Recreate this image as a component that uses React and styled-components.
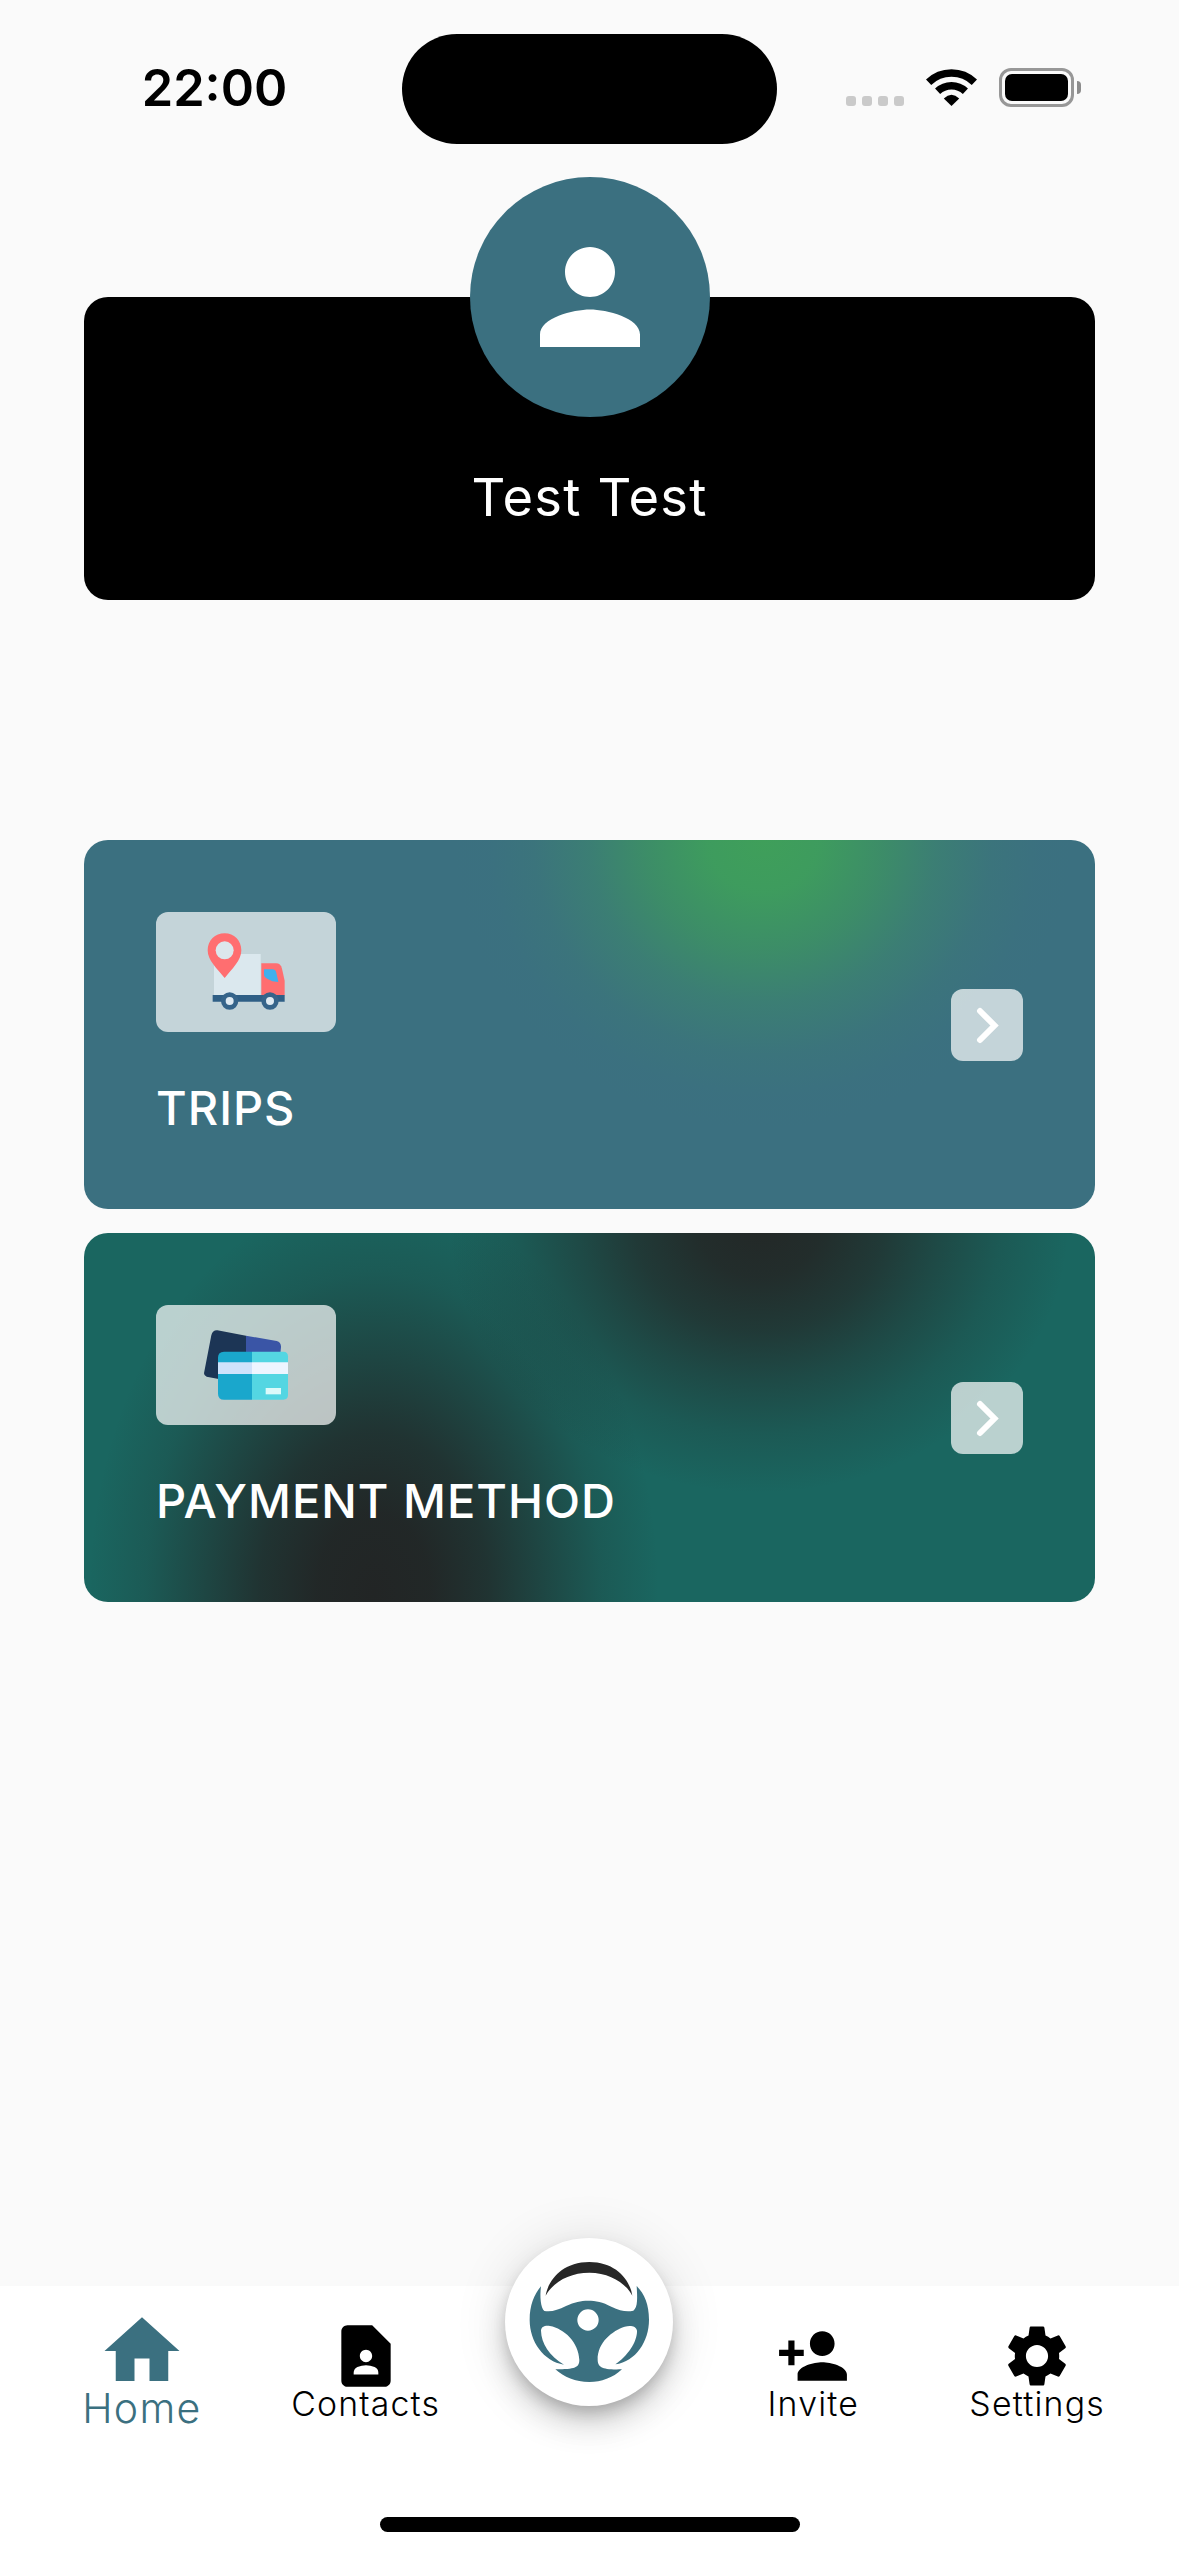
import React from "react";
import styled, { createGlobalStyle } from "styled-components";
import {
  MdPerson,
  MdHome,
  MdContactPage,
  MdPersonAdd,
  MdSettings,
} from "react-icons/md";

const teal = "#3b7080";

const GlobalStyle = createGlobalStyle`
  * { box-sizing: border-box; }
  body {
    margin: 0;
    background: #fafafa;
    font-family: Inter, "Liberation Sans", sans-serif;
    -webkit-font-smoothing: antialiased;
  }
  svg { display: block; }
`;

const Screen = styled.div`
  display: flex;
  flex-direction: column;
  width: 1179px;
  height: 2556px;
  background: #fafafa;
  overflow: hidden;
`;

const StatusBar = styled.header`
  display: flex;
  align-items: flex-start;
  height: 177px;
  padding-top: 34px;
`;

const Clock = styled.div`
  width: 402px;
  padding-left: 27px;
  line-height: 108px;
  text-align: center;
  font-size: 50.5px;
  font-weight: 600;
  letter-spacing: ${(p) => p.$tracking}px;
`;

const Island = styled.div`
  width: 375px;
  height: 110px;
  border-radius: 55px;
  background: #000;
`;

const StatusIcons = styled.div`
  display: flex;
  align-items: flex-end;
  height: 73px;
  padding-left: 69px;
`;

const SignalDots = styled.div`
  display: flex;
  gap: 6px;
  margin: 0 22px 1px 0;
`;

const Dot = styled.span`
  width: 10px;
  height: 10px;
  border-radius: 3px;
  background: #cacaca;
`;

const WifiIcon = styled.svg`
  width: 51px;
  height: 37px;
  margin: 0 22px 1px 0;
`;

const Battery = styled.div`
  width: 75px;
  height: 39px;
  padding: 4px;
  border: 3px solid #979797;
  border-radius: 12px;
`;

const BatteryLevel = styled.div`
  height: 100%;
  margin: -1px;
  height: 27px;
  border-radius: 7px;
  background: #000;
`;

const BatteryTip = styled.div`
  width: 4px;
  height: 13px;
  margin: 0 0 13px 3px;
  border-radius: 0 4px 4px 0;
  background: #8c8c8c;
`;

const Content = styled.main`
  display: flex;
  flex: 1;
  flex-direction: column;
  padding: 0 84px;
`;

const Avatar = styled.div`
  display: flex;
  align-items: center;
  justify-content: center;
  align-self: center;
  width: 240px;
  height: 240px;
  margin-bottom: -120px;
  border-radius: 50%;
  background: ${teal};
  color: #fff;
  font-size: 150px;
  z-index: 1;
`;

const ProfileCard = styled.section`
  display: flex;
  flex-direction: column;
  align-items: center;
  height: 303px;
  padding-top: 168px;
  border-radius: 24px;
  background: #000;
`;

const ProfileName = styled.h1`
  margin: 0;
  line-height: 64px;
  color: #fff;
  font-size: 52.5px;
  font-weight: 400;
  letter-spacing: 1.2px;
`;

const Menu = styled.nav`
  display: flex;
  flex-direction: column;
  gap: 24px;
  margin-top: 240px;
`;

const tripsBackground = `
  radial-gradient(ellipse 310px 290px at 679px 0,
    #3f9f5a 0%,
    rgba(62,158,92,.95) 18%,
    rgba(61,150,96,.76) 38%,
    rgba(60,140,104,.5) 56%,
    rgba(60,128,112,.25) 74%,
    rgba(59,118,122,.08) 89%,
    rgba(59,112,128,0) 100%),
  ${teal}`;

const paymentBackground = `
  radial-gradient(ellipse 310px 270px at 675px -10px,
    rgba(35,40,39,1) 0%,
    rgba(35,40,39,.92) 20%,
    rgba(35,40,39,.72) 40%,
    rgba(35,40,39,.46) 58%,
    rgba(35,40,39,.2) 78%,
    rgba(35,40,39,0) 100%),
  radial-gradient(ellipse 285px 400px at 290px 360px,
    rgba(34,37,37,1) 0%,
    rgba(34,37,37,.96) 20%,
    rgba(34,37,37,.78) 40%,
    rgba(34,37,37,.48) 60%,
    rgba(34,37,37,.18) 80%,
    rgba(34,37,37,0) 100%),
  #1a6660`;

const MenuCard = styled.article`
  display: flex;
  align-items: center;
  justify-content: space-between;
  height: 369px;
  padding: 72px;
  border-radius: 24px;
  background: ${(p) => p.$background};
`;

const CardBody = styled.div`
  display: flex;
  flex-direction: column;
  gap: 46px;
  height: 100%;
`;

const IconTile = styled.div`
  width: 180px;
  height: 120px;
  border-radius: 12px;
  background: rgba(255, 255, 255, 0.7);
`;

const TileArt = styled.svg`
  width: 180px;
  height: 120px;
`;

const CardTitle = styled.h2`
  margin: 0;
  line-height: 60px;
  color: #fff;
  font-size: 47px;
  font-weight: 500;
  letter-spacing: 1px;
  white-space: nowrap;
`;

const ArrowButton = styled.button`
  display: flex;
  align-items: center;
  justify-content: center;
  width: 72px;
  height: 72px;
  padding: 0;
  border: 0;
  border-radius: 12px;
  background: rgba(255, 255, 255, 0.7);
`;

const BottomBar = styled.footer`
  display: grid;
  grid-template-columns: repeat(5, 1fr);
  height: 231px;
  padding: 0 30px;
  background: #fff;
`;

const Tab = styled.a`
  display: flex;
  flex-direction: column;
  align-items: center;
  padding-top: ${(p) => (p.$active ? 20 : 32.5)}px;
  color: ${(p) => (p.$active ? teal : "#000")};
  font-size: ${(p) => (p.$active ? 90 : 74)}px;
`;

const TabLabel = styled.span`
  margin-top: ${(p) => (p.$active ? -13 : -14)}px;
  line-height: 50px;
  font-size: ${(p) => (p.$active ? 41 : 33.8)}px;
  font-weight: 300;
  letter-spacing: ${(p) => (p.$active ? 1.3 : 1.2)}px;
`;

const DriveButton = styled.button`
  display: flex;
  align-items: center;
  justify-content: center;
  justify-self: center;
  width: 168px;
  height: 168px;
  margin-top: -48px;
  padding: 0;
  border: 0;
  border-radius: 50%;
  background: #fff;
  box-shadow:
    0 9px 15px -3px rgba(0, 0, 0, 0.2),
    0 18px 30px rgba(0, 0, 0, 0.14),
    0 3px 54px rgba(0, 0, 0, 0.12);
`;

const HomeIndicatorRow = styled.div`
  display: flex;
  justify-content: center;
  height: 39px;
  background: #fff;
`;

const HomeIndicator = styled.div`
  width: 420px;
  height: 15px;
  border-radius: 8px;
  background: #000;
`;

const Wifi = () => (
  <WifiIcon viewBox="0 0 51 37">
    <g fill="none" stroke="#000">
      <path d="M2.6 13.2A33 33 0 0 1 48.4 13.2" strokeWidth="7.6" />
      <path d="M11.6 22.3A20.2 20.2 0 0 1 39.4 22.3" strokeWidth="7.4" />
    </g>
    <path d="M25.5 37 17.8 29.4Q25.5 22 33.2 29.4Z" fill="#000" />
  </WifiIcon>
);

const Truck = () => (
  <TileArt viewBox="48 66 540 360">
    <path d="M222 192h140v124H222z" fill="#dbe8ee" />
    <path d="M364 220h44q14 0 18 16l8 36v44h-70z" fill="#ff6e70" />
    <path d="M372 238h26q8 0 11 10l6 28-18-2-14-7q-11-5-11-14z" fill="#3fb0ed" />
    <path d="M218 315h216v20H218z" fill="#2f5f86" />
    {[269, 390].map((cx) => (
      <circle key={cx} cx={cx} cy="333" r="19" fill="#dfeaf2" stroke="#36648a" strokeWidth="14" />
    ))}
    <path
      d="M254 130c-29 0-51 22-51 51 0 30 28 55 51 83 23-28 50-53 50-83 0-29-22-51-50-51z"
      fill="#ff6e70"
    />
    <circle cx="254" cy="181" r="27" fill="#dce7ec" />
  </TileArt>
);

const Cards = () => (
  <TileArt viewBox="48 45 540 360">
    <path d="M232 121 318 137V200H236V267L200 260Q192 258 192 250L214 136Q218 120 232 121Z" fill="#1c3555" />
    <path d="M318 137 410 153Q424 157 423 172L420 200H318Z" fill="#3a55a6" />
    <path d="M252 185H336V329H252Q234 329 234 311V203Q234 185 252 185Z" fill="#1aa7cc" />
    <path d="M336 185H430Q444 185 444 199V315Q444 329 430 329H336Z" fill="#54d6e2" />
    <path d="M234 217H336V252H234Z" fill="#cfe2fb" />
    <path d="M336 217H444V252H336Z" fill="#eef5ff" />
    <path d="M377 294H423V313H377Z" fill="#dcfafa" />
  </TileArt>
);

const Chevron = () => (
  <svg width="72" height="72" viewBox="0 0 72 72" fill="none">
    <path d="M29 22 43.5 36.5 29 51" stroke="#fff" strokeWidth="6" strokeLinecap="round" />
  </svg>
);

const SteeringWheel = () => (
  <svg width="120" height="120" viewBox="153 126 360 360">
    <path
      d="M203 227C210 182 252 126 334 126C412 126 456 178 463 227C444 190 396 158 334 158C274 158 226 186 203 227Z"
      fill="#272727"
    />
    <g fill={teal}>
      <path
        fillRule="evenodd"
        d="M189 199C185 230 188 264 199 273C222 276 240 270 264 258C290 246 308 242 330 242C354 242 374 246 400 260C426 272 444 276 466 272C480 262 478 232 476 198C500 222 513 254 513 299C513 364 474 424 412 433C448 408 478 366 477 332C474 318 458 316 440 320C404 332 358 366 359 420C360 442 372 450 432 448C404 474 370 486 334 486C292 486 258 472 232 448C292 448 304 442 304 420C302 366 258 326 216 318C200 316 190 320 189 332C190 370 214 408 258 434C196 424 155 364 155 300C155 256 168 224 189 199ZM330 268A32 32 0 1 0 330 332A32 32 0 1 0 330 268Z"
      />
    </g>
  </svg>
);

const menuItems = [
  { title: "TRIPS", Art: Truck, background: tripsBackground },
  { title: "PAYMENT METHOD", Art: Cards, background: paymentBackground },
];

const NavTab = ({ icon: Icon, label, active }) => (
  <Tab $active={active}>
    <Icon />
    <TabLabel $active={active}>{label}</TabLabel>
  </Tab>
);

export default function App() {
  return (
    <Screen>
      <GlobalStyle />
      <StatusBar>
        <Clock $tracking={0}>22:00</Clock>
        <Island />
        <StatusIcons>
          <SignalDots>
            <Dot />
            <Dot />
            <Dot />
            <Dot />
          </SignalDots>
          <Wifi />
          <Battery>
            <BatteryLevel />
          </Battery>
          <BatteryTip />
        </StatusIcons>
      </StatusBar>
      <Content>
        <Avatar>
          <MdPerson />
        </Avatar>
        <ProfileCard>
          <ProfileName>Test Test</ProfileName>
        </ProfileCard>
        <Menu>
          {menuItems.map(({ title, Art, background }) => (
            <MenuCard key={title} $background={background}>
              <CardBody>
                <IconTile>
                  <Art />
                </IconTile>
                <CardTitle>{title}</CardTitle>
              </CardBody>
              <ArrowButton aria-label={title}>
                <Chevron />
              </ArrowButton>
            </MenuCard>
          ))}
        </Menu>
      </Content>
      <BottomBar>
        <NavTab icon={MdHome} label="Home" active />
        <NavTab icon={MdContactPage} label="Contacts" />
        <DriveButton aria-label="Drive">
          <SteeringWheel />
        </DriveButton>
        <NavTab icon={MdPersonAdd} label="Invite" />
        <NavTab icon={MdSettings} label="Settings" />
      </BottomBar>
      <HomeIndicatorRow>
        <HomeIndicator />
      </HomeIndicatorRow>
    </Screen>
  );
}
